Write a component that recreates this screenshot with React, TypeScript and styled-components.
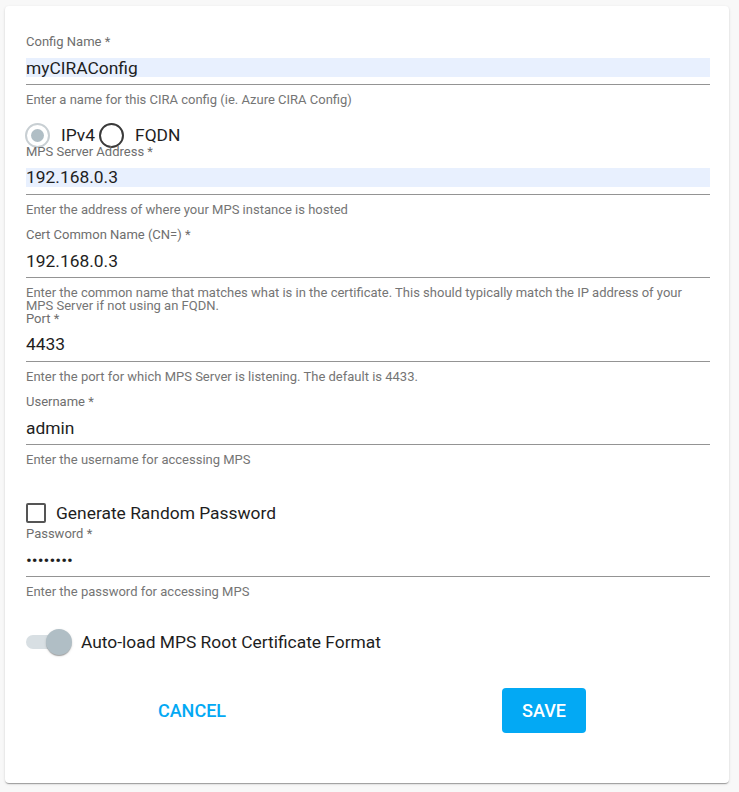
import React from "react";
import styled, { createGlobalStyle } from "styled-components";

const Global = createGlobalStyle`
  html, body { margin: 0; padding: 0; background: #f8f8f8; }
  body { font-family: Roboto, "Noto Sans", "Liberation Sans", sans-serif; }
  * { box-sizing: border-box; }
`;

const Page = styled.div`
  padding: 6px 10px 8px 5px;
`;

const Card = styled.div`
  background: #fff;
  border-radius: 4px;
  box-shadow: 0 2px 1px -1px rgba(0,0,0,.2), 0 1px 1px 0 rgba(0,0,0,.14), 0 1px 3px 0 rgba(0,0,0,.12);
  padding: 27px 19px 50px 21px;
  display: flex;
  flex-direction: column;
`;

const Field = styled.div`
  display: flex;
  flex-direction: column;
  height: 83.5px;
`;

const Label = styled.label`
  font-size: 13px;
  line-height: 14px;
  padding: 2px 0;
  color: #6e6e6e;
`;

const InputWrap = styled.div`
  padding: 7px 0;
  border-bottom: 1px solid #949494;
`;

const Input = styled.input<{ $filled?: boolean }>`
  display: block;
  width: 100%;
  height: 19px;
  border: none;
  outline: none;
  padding: 0;
  margin: 0;
  background: ${(p) => (p.$filled ? "#e8f0fe" : "transparent")};
  font-family: Roboto, sans-serif;
  font-size: 17.4px;
  color: #1e1e1e;
`;

const Hint = styled.div`
  margin-top: 8px;
  font-size: 13px;
  line-height: 13px;
  color: #757575;
`;

const RadioGroup = styled.div`
  display: flex;
  align-items: center;
  height: 25px;
  margin: 6px 0 -5px -1px;
`;

const RadioCircle = styled.span<{ $checked?: boolean }>`
  width: 25px;
  height: 25px;
  border-radius: 50%;
  border: 2px solid ${(p) => (p.$checked ? "#c8cfd3" : "#3a3a3a")};
  display: flex;
  align-items: center;
  justify-content: center;
  flex: none;
  &::after {
    content: "";
    display: ${(p) => (p.$checked ? "block" : "none")};
    width: 13px;
    height: 13px;
    border-radius: 50%;
    background: #b0bec5;
  }
`;

const OptionText = styled.span`
  font-size: 17.4px;
  color: #1e1e1e;
  margin: 0 4px 0 11px;
`;

const CheckRow = styled.div`
  display: flex;
  align-items: center;
  height: 24px;
  margin-top: 24.5px;
`;

const CheckBox = styled.span`
  width: 20px;
  height: 20px;
  border: 2px solid #555;
  border-radius: 2px;
  flex: none;
`;

const CheckText = styled.span`
  font-size: 17.4px;
  color: #1e1e1e;
  margin-left: 10px;
`;

const ToggleRow = styled.div`
  display: flex;
  align-items: center;
  height: 28px;
  margin-top: 19.5px;
`;

const Toggle = styled.span`
  position: relative;
  width: 46px;
  height: 28px;
  flex: none;
`;

const Track = styled.span`
  position: absolute;
  left: 0;
  top: 7px;
  width: 34px;
  height: 14px;
  border-radius: 7px;
  background: #d8dfe3;
`;

const Thumb = styled.span`
  position: absolute;
  left: 20px;
  top: 1px;
  width: 26px;
  height: 26px;
  border-radius: 50%;
  background: #b0bec5;
  box-shadow: 0 2px 1px -1px rgba(0,0,0,.2), 0 1px 1px 0 rgba(0,0,0,.14), 0 1px 3px 0 rgba(0,0,0,.12);
`;

const ToggleText = styled.span`
  font-size: 17.4px;
  color: #1e1e1e;
  margin-left: 9px;
`;

const Actions = styled.div`
  display: grid;
  grid-template-columns: 1fr 1fr;
  justify-items: center;
  align-items: center;
  margin: 32px -10px 0 -10px;
`;

const Button = styled.button<{ $primary?: boolean }>`
  height: 45px;
  padding: 0 20px;
  border: none;
  border-radius: 4px;
  font-family: Roboto, sans-serif;
  font-size: 18px;
  font-weight: 500;
  text-transform: uppercase;
  background: ${(p) => (p.$primary ? "#03a9f4" : "transparent")};
  color: ${(p) => (p.$primary ? "#fff" : "#03a9f4")};
  cursor: pointer;
`;

type FieldProps = {
  label: string;
  value: string;
  hint: string;
  filled?: boolean;
  type?: string;
};

const FormField = ({ label, value, hint, filled, type = "text" }: FieldProps) => (
  <Field>
    <Label>{label}</Label>
    <InputWrap>
      <Input $filled={filled} type={type} value={value} readOnly />
    </InputWrap>
    <Hint>{hint}</Hint>
  </Field>
);

export default function App() {
  return (
    <Page>
      <Global />
      <Card>
        <FormField
          label="Config Name *"
          value="myCIRAConfig"
          filled
          hint="Enter a name for this CIRA config (ie. Azure CIRA Config)"
        />
        <RadioGroup>
          <RadioCircle $checked />
          <OptionText>IPv4</OptionText>
          <RadioCircle />
          <OptionText>FQDN</OptionText>
        </RadioGroup>
        <FormField
          label="MPS Server Address *"
          value="192.168.0.3"
          filled
          hint="Enter the address of where your MPS instance is hosted"
        />
        <FormField
          label="Cert Common Name (CN=) *"
          value="192.168.0.3"
          hint="Enter the common name that matches what is in the certificate. This should typically match the IP address of your MPS Server if not using an FQDN."
        />
        <FormField
          label="Port *"
          value="4433"
          hint="Enter the port for which MPS Server is listening. The default is 4433."
        />
        <FormField
          label="Username *"
          value="admin"
          hint="Enter the username for accessing MPS"
        />
        <CheckRow>
          <CheckBox />
          <CheckText>Generate Random Password</CheckText>
        </CheckRow>
        <FormField
          label="Password *"
          value="password"
          type="password"
          hint="Enter the password for accessing MPS"
        />
        <ToggleRow>
          <Toggle>
            <Track />
            <Thumb />
          </Toggle>
          <ToggleText>Auto-load MPS Root Certificate Format</ToggleText>
        </ToggleRow>
        <Actions>
          <Button>Cancel</Button>
          <Button $primary>Save</Button>
        </Actions>
      </Card>
    </Page>
  );
}
